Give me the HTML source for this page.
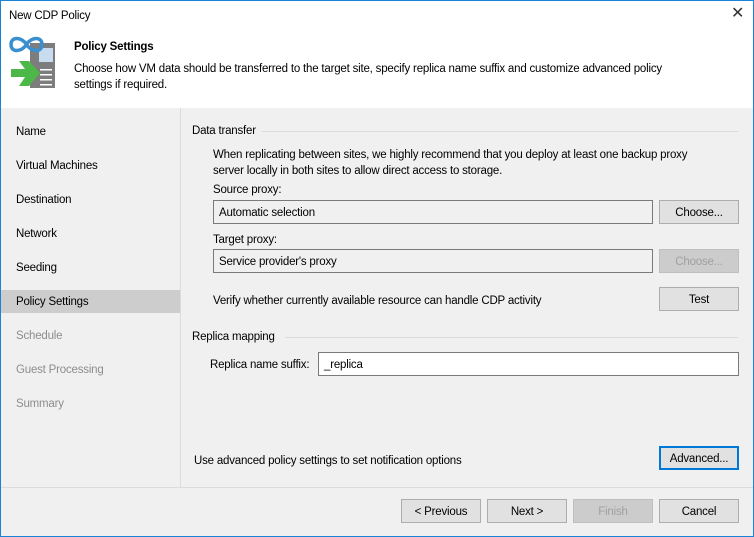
<!DOCTYPE html>
<html><head><style>
*{box-sizing:border-box;margin:0;padding:0}
body{width:754px;height:537px;overflow:hidden;font-family:"Liberation Sans",sans-serif;font-size:11.5px;letter-spacing:-0.2px;color:#000;background:#f0f0f0;position:relative;white-space:nowrap}
.abs{position:absolute}
.hdr{left:0;top:0;width:754px;height:108px;background:#fff}
.btn{position:absolute;height:24px;border:1px solid #adadad;background:#e1e1e1;text-align:center;line-height:24px}
.dis{color:#a0a0a0;background:#cccccc;border-color:#bfbfbf}
.box{position:absolute;height:24px;border:1px solid #7a7a7a;background:#f0f0f0;line-height:24px;padding-left:5px}
.nav{position:absolute;left:16px}
.g{color:#8d8d8d}
</style></head><body>
<div class="abs hdr"></div>
<div class="abs" style="left:9px;top:10px">New CDP Policy</div>
<div class="abs" style="left:731px;top:3px;font-size:16px;color:#333">✕</div>
<svg class="abs" style="left:0;top:30px" width="70" height="65" viewBox="0 30 70 65">
<rect x="30" y="43" width="25" height="45" fill="#7d7d7d"/>
<rect x="39" y="48" width="14" height="14" fill="#c8dcf0"/>
<rect x="40" y="69" width="12" height="1.5" fill="#fff"/><rect x="40" y="74" width="12" height="1.5" fill="#fff"/><rect x="40" y="79" width="12" height="1.5" fill="#fff"/><rect x="40" y="84" width="12" height="1.5" fill="#fff"/>
<path d="M26.5 44.5 C22 37,11 36,11 44.5 C11 53,22 52,26.5 44.5 C31 37,42 36,42 44.5 C42 53,31 52,26.5 44.5Z" fill="none" stroke="#3a8fd0" stroke-width="3.5"/>
<path d="M11 69 H25 L19 61 H29 L40 73 L29 86 H19 L25 77 H11Z" fill="#4cb848"/>
</svg>
<div class="abs" style="left:74px;top:41px;font-weight:bold">Policy Settings</div>
<div class="abs" style="left:74px;top:61px;line-height:16px">Choose how VM data should be transferred to the target site, specify replica name suffix and customize advanced policy<br>settings if required.</div>
<div class="abs" style="left:180px;top:108px;width:1px;height:379px;background:#dcdcdc"></div>
<div class="abs" style="left:1px;top:290px;width:179px;height:23px;background:#cdcdcd"></div>
<div class="nav" style="top:126px">Name</div>
<div class="nav" style="top:160px">Virtual Machines</div>
<div class="nav" style="top:194px">Destination</div>
<div class="nav" style="top:228px">Network</div>
<div class="nav" style="top:262px">Seeding</div>
<div class="nav" style="top:296px">Policy Settings</div>
<div class="nav g" style="top:330px">Schedule</div>
<div class="nav g" style="top:364px">Guest Processing</div>
<div class="nav g" style="top:398px">Summary</div>
<div class="abs" style="left:192px;top:125px">Data transfer</div>
<div class="abs" style="left:262px;top:131px;width:476px;height:1px;background:#dcdcdc"></div>
<div class="abs" style="left:213px;top:147px;line-height:16px">When replicating between sites, we highly recommend that you deploy at least one backup proxy<br>server locally in both sites to allow direct access to storage.</div>
<div class="abs" style="left:213px;top:184px">Source proxy:</div>
<div class="box" style="left:213px;top:200px;width:440px">Automatic selection</div>
<div class="btn" style="left:659px;top:200px;width:80px">Choose...</div>
<div class="abs" style="left:213px;top:234px">Target proxy:</div>
<div class="box" style="left:213px;top:249px;width:440px">Service provider's proxy</div>
<div class="btn dis" style="left:659px;top:249px;width:80px">Choose...</div>
<div class="abs" style="left:213px;top:295px">Verify whether currently available resource can handle CDP activity</div>
<div class="btn" style="left:659px;top:287px;width:80px">Test</div>
<div class="abs" style="left:192px;top:331px">Replica mapping</div>
<div class="abs" style="left:285px;top:337px;width:453px;height:1px;background:#dcdcdc"></div>
<div class="abs" style="left:210px;top:359px">Replica name suffix:</div>
<div class="box" style="left:318px;top:352px;width:421px;background:#fff">_replica</div>
<div class="abs" style="left:194px;top:455px">Use advanced policy settings to set notification options</div>
<div class="btn" style="left:659px;top:446px;width:80px;border:2px solid #0078d7;line-height:22px">Advanced...</div>
<div class="abs" style="left:0;top:487px;width:754px;height:1px;background:#dcdcdc"></div>
<div class="btn" style="left:401px;top:499px;width:80px">&lt; Previous</div>
<div class="btn" style="left:487px;top:499px;width:80px">Next &gt;</div>
<div class="btn dis" style="left:573px;top:499px;width:80px">Finish</div>
<div class="btn" style="left:659px;top:499px;width:80px">Cancel</div>
<div class="abs" style="left:0;top:0;width:754px;height:537px;border:1px solid #1883d7"></div>
</body></html>
